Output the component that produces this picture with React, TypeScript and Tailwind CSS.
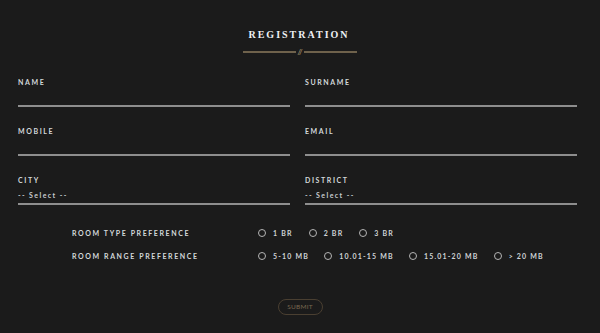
import React from "react";

const labelCls =
  "block text-[7px] leading-[10px] font-bold tracking-[1.6px] text-[#d3d8da] uppercase";

function Field({ label, select }: { label: string; select?: boolean }) {
  return (
    <div className="flex flex-col">
      <span className={labelCls}>{label}</span>
      {select ? (
        <div className="h-[15px] flex items-end pb-[3px] border-b-2 border-[#8e8e8e] box-content">
          <span className="text-[7px] leading-[10px] font-bold tracking-[1.4px] text-[#c9cdd0]">-- Select --</span>
        </div>
      ) : (
        <div className="h-[18px] border-b-2 border-[#8e8e8e] box-content" />
      )}
    </div>
  );
}

function Radio({ label }: { label: string }) {
  return (
    <div className="flex items-center gap-[7px]">
      <span className="w-[8px] h-[8px] rounded-full border-[1.5px] border-[#b5b5b5] box-border" />
      <span className="text-[7px] leading-[10px] font-bold tracking-[1.2px] text-[#cfd3d6]">{label}</span>
    </div>
  );
}

export default function App() {
  return (
    <div
      className="w-[600px] h-[333px] bg-[#1b1b1b] overflow-hidden"
      style={{ fontFamily: "Lato, 'Liberation Sans', sans-serif" }}
    >
      <div className="pt-[29px] flex flex-col items-center">
        <h1
          className="text-[10px] leading-[12px] font-bold tracking-[2px] text-[#eef0f4] pl-[2px] -translate-x-[2px]"
          style={{ fontFamily: "'Liberation Serif', 'DejaVu Serif', serif" }}
        >
          REGISTRATION
        </h1>
        <div className="mt-[8px] flex items-center gap-[2px]">
          <span className="w-[53px] h-[2px] bg-[#6f624c]" />
          <span className="text-[7px] leading-[6px] font-bold text-[#9a8866] italic">//</span>
          <span className="w-[53px] h-[2px] bg-[#6f624c]" />
        </div>
      </div>

      <div className="px-[18px] pr-[23px] mt-[22px] grid grid-cols-2 gap-x-[15px] gap-y-[19px]">
        <Field label="Name" />
        <Field label="Surname" />
        <Field label="Mobile" />
        <Field label="Email" />
        <Field label="City" select />
        <Field label="District" select />
      </div>

      <div className="pl-[72px] mt-[23px] flex flex-col gap-[13px]">
        <div className="flex items-center">
          <span className={labelCls + " w-[186px]"}>Room Type Preference</span>
          <div className="flex items-center gap-[16px]">
            <Radio label="1 BR" />
            <Radio label="2 BR" />
            <Radio label="3 BR" />
          </div>
        </div>
        <div className="flex items-center">
          <span className={labelCls + " w-[186px]"}>Room Range Preference</span>
          <div className="flex items-center gap-[15px]">
            <Radio label="5-10 MB" />
            <Radio label="10.01-15 MB" />
            <Radio label="15.01-20 MB" />
            <Radio label="> 20 MB" />
          </div>
        </div>
      </div>

      <div className="mt-[38px] flex justify-center">
        <button className="w-[45px] h-[16px] rounded-full border border-[#4a3f31] text-[6.5px] leading-[6px] text-[#7a6850] tracking-[0.2px]">
          SUBMIT
        </button>
      </div>
    </div>
  );
}
